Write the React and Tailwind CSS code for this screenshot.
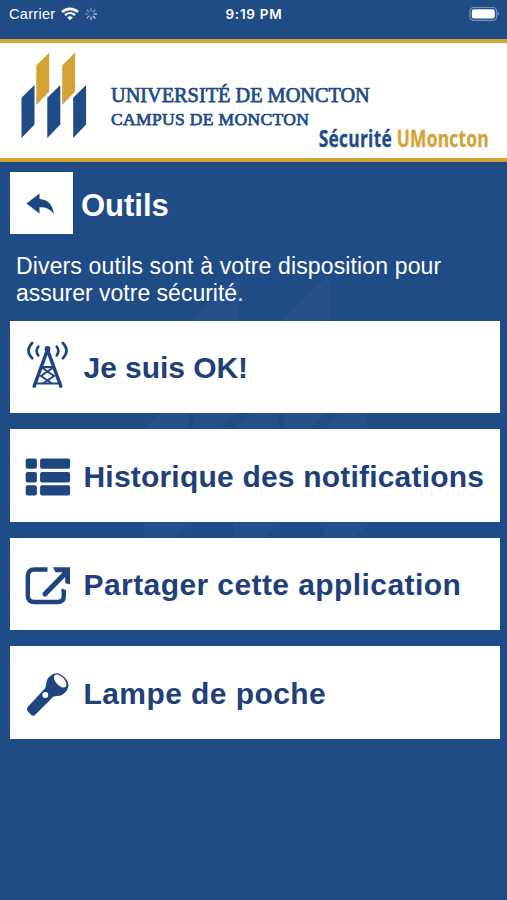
import React from "react";

const BLUE = "#1f4c87";
const GOLD = "#d4a336";

function Watermark() {
  return (
    <svg className="absolute left-0 top-0 -z-10" width="507" height="900" fill="#25508c" aria-hidden="true">
      <path d="M194 317L239 275V411L194 455Z M284 317L329 275V411L284 455Z" />
      <path d="M144 428L189 386V525L144 569Z M234 428L278 386V525L234 569Z M324 428L367 386V525L324 569Z" />
    </svg>
  );
}

function StatusBar() {
  return (
    <div className="grid h-[39px] grid-cols-3 pl-[9px] pr-[7px] pt-[4px] text-white">
      <div className="flex h-5 items-center">
        <span className="text-[14.5px] leading-5 tracking-[0.3px]">Carrier</span>
        <svg className="ml-[6px]" width="18" height="14" viewBox="0 0 18 14" fill="none" stroke="#fff">
          <path d="M1 5C5.5 0.8 12.5 0.8 17 5" strokeWidth="2.6" />
          <path d="M4 8.1C7 5.4 11 5.4 14 8.1" strokeWidth="2.3" />
          <path d="M9 13.3L6.2 10.4Q9 8.2 11.8 10.4Z" fill="#fff" stroke="none" />
        </svg>
        <svg className="ml-[5px]" width="14" height="14" viewBox="-7 -7 14 14" stroke="#fff" strokeWidth="1.2" strokeLinecap="round">
          <path d="M0 -3V-5.6" opacity=".45" />
          <path d="M2.1 -2.1L4 -4" opacity=".5" />
          <path d="M3 0H5.6" opacity=".95" />
          <path d="M2.1 2.1L4 4" opacity=".85" />
          <path d="M0 3V5.6" opacity=".75" />
          <path d="M-2.1 2.1L-4 4" opacity=".6" />
          <path d="M-3 0H-5.6" opacity=".4" />
          <path d="M-2.1 -2.1L-4 -4" opacity=".4" />
        </svg>
      </div>
      <div className="-ml-px text-center font-['Inter',sans-serif] text-[13.5px] font-semibold leading-5 tracking-[0.75px]">9:19 PM</div>
      <div className="flex h-5 items-center justify-end">
        <svg width="31" height="15" viewBox="0 0 31 15">
          <rect x="0.9" y="0.4" width="26.8" height="13" rx="4" fill="none" stroke="#fff" strokeOpacity=".4" strokeWidth="1.2" />
          <rect x="2.8" y="2.3" width="23" height="9.2" rx="2.2" fill="#fff" />
          <path d="M28.8 4.5Q31 6.9 28.8 9.3Z" fill="#fff" opacity=".5" />
        </svg>
      </div>
    </div>
  );
}

function Logo() {
  return (
    <svg className="ml-[21px] mt-[9px] shrink-0" width="66" height="87" viewBox="21 52 66 87" aria-hidden="true">
      <path fill={GOLD} d="M36.3 65.5L49.2 52.6V91.5L36.3 105Z M62.2 65.5L75.1 52.6V91.5L62.2 105Z" />
      <path fill={BLUE} d="M21.5 97.8L34.5 85V124.5L21.5 138Z M47.3 97.8L60.3 85V124.5L47.3 138Z M73.2 97.8L86.1 85V124.5L73.2 138Z" />
    </svg>
  );
}

function Header() {
  return (
    <header className="flex h-[123px] border-y-4 border-[#d4a336] bg-white text-[#1f4c87]">
      <Logo />
      <div className="ml-[24px] flex-1 whitespace-nowrap pt-[40px]">
        <div className="font-['Liberation_Serif',serif] text-[20.3px] leading-6 [-webkit-text-stroke:0.75px_#1f4c87]">UNIVERSITÉ DE MONCTON</div>
        <div className="font-['Liberation_Serif',serif] text-[17.5px] leading-6 tracking-[0.35px] [-webkit-text-stroke:0.75px_#1f4c87]">CAMPUS DE MONCTON</div>
        <div className="-mt-[4px] mr-[18px] origin-right scale-x-[0.78] text-right font-['Open_Sans',sans-serif] text-[22.3px] font-bold leading-6 tracking-[0.3px] [-webkit-text-stroke:0.3px_currentColor]">
          Sécurité <span className="text-[#d4a336]">UMoncton</span>
        </div>
      </div>
    </header>
  );
}

function TowerIcon() {
  return (
    <svg className="-mt-[6px]" width="46" height="50" viewBox="0 0 46 50" fill="none" stroke="#1f4580">
      <circle cx="22.5" cy="9" r="2.9" fill="#1f4580" stroke="none" />
      <path d="M21.7 12L9.2 46.2M23.3 12L35.8 46.2" strokeWidth="3.5" strokeLinecap="round" />
      <path d="M17 27.2H28M12 43.5H33" strokeWidth="2.2" />
      <path d="M17.5 28L29 36L18 43.5M27.5 28L16 36L27 43.5" strokeWidth="2" />
      <path d="M13.3 6.5Q10 11 13.3 15.5M31.7 6.5Q35 11 31.7 15.5M7.2 3Q-0.3 10.5 7.2 18.3M37.8 3Q45.3 10.5 37.8 18.3" strokeWidth="2.6" strokeLinecap="round" />
    </svg>
  );
}

function ListIcon() {
  return (
    <svg className="mt-px" width="46" height="38" viewBox="0 0 46 38" fill="#1f4580">
      {[0.4, 14, 27.2].map((y) => (
        <g key={y}>
          <rect x="0.7" y={y} width="11.2" height="10.4" rx="2" />
          <rect x="15.1" y={y} width="30" height="10.4" rx="2" />
        </g>
      ))}
    </svg>
  );
}

function ShareIcon() {
  return (
    <svg className="mt-[3px]" width="46" height="40" viewBox="0 0 46 40" fill="none" stroke="#1f4580">
      <path d="M22.5 3.5H9.5Q2.8 3.5 2.8 10V29.5Q2.8 36 9.5 36H32.5Q38.8 36 38.8 30V24" strokeWidth="4.4" />
      <path d="M36.6 22.5L41 24V26H36.6Z" fill="#1f4580" stroke="none" />
      <path d="M20 28L41 6.5" strokeWidth="5.2" strokeLinecap="round" />
      <path d="M28 1.2H45V18.3L40.2 17.3V10L37 6.2H30.5Z" fill="#1f4580" stroke="none" />
    </svg>
  );
}

function FlashlightIcon() {
  return (
    <svg className="mt-[4px]" width="46" height="46" viewBox="0 0 46 46" fill="#1f4580">
      <path d="M20.3 16L22 8Q25.5 2 30.5 1.5C36 0 46 10 43 15.5Q42 20 36 23.5L28.5 24.5L10 43Q8 44.6 5.8 42.5L2.7 39.3Q1 37 2.7 35Z" />
      <ellipse cx="35.2" cy="9" rx="8" ry="4.2" transform="rotate(46 35.2 9)" fill="#fff" />
      <circle cx="20.3" cy="23" r="2.9" fill="#fff" />
    </svg>
  );
}

const tools = [
  { label: "Je suis OK!", icon: <TowerIcon />, style: "tracking-[-0.05px]" },
  { label: "Historique des notifications", icon: <ListIcon />, style: "tracking-[0.2px]" },
  { label: "Partager cette application", icon: <ShareIcon />, style: "tracking-[0.42px]" },
  { label: "Lampe de poche", icon: <FlashlightIcon />, style: "tracking-[0.42px]" },
];

export default function App() {
  return (
    <div className="relative isolate h-[900px] w-[507px] overflow-hidden bg-[#1f4c87] font-['Liberation_Sans',Arial,sans-serif]">
      <Watermark />
      <StatusBar />
      <Header />
      <main className="pl-[10px] pr-[7px] pt-[10px]">
        <div className="flex items-center gap-2">
          <button className="flex h-[62px] w-[63px] items-center justify-center bg-white" aria-label="Retour">
            <svg className="-ml-[2px] mt-px" width="29" height="22" viewBox="0 0 29 22" fill="#1f4580">
              <path d="M0.5 10.5L13.5 0.5V6C22 6.5 27 12 27.8 21C24 16 20 14.2 13.5 14.3V20.5Z" />
            </svg>
          </button>
          <h1 className="pt-[5px] text-[31px] font-bold leading-9 text-white">Outils</h1>
        </div>
        <p className="mt-[19px] whitespace-nowrap pl-[6px] text-[23px] leading-[26.5px] tracking-[0.14px] text-white">
          Divers outils sont à votre disposition pour<br /><span className="tracking-normal">assurer votre sécurité.</span>
        </p>
        <div className="mt-[14.5px] flex flex-col gap-4">
          {tools.map((tool) => (
            <button key={tool.label} className="flex h-[92.5px] items-center bg-white pl-[15px] pt-[2px] text-left text-[#1f4078]">
              <span className="flex w-[46px] shrink-0 justify-center">{tool.icon}</span>
              <span className={"ml-[12.5px] whitespace-nowrap pt-px text-[30px] font-bold leading-9 " + tool.style}>{tool.label}</span>
            </button>
          ))}
        </div>
      </main>
    </div>
  );
}
